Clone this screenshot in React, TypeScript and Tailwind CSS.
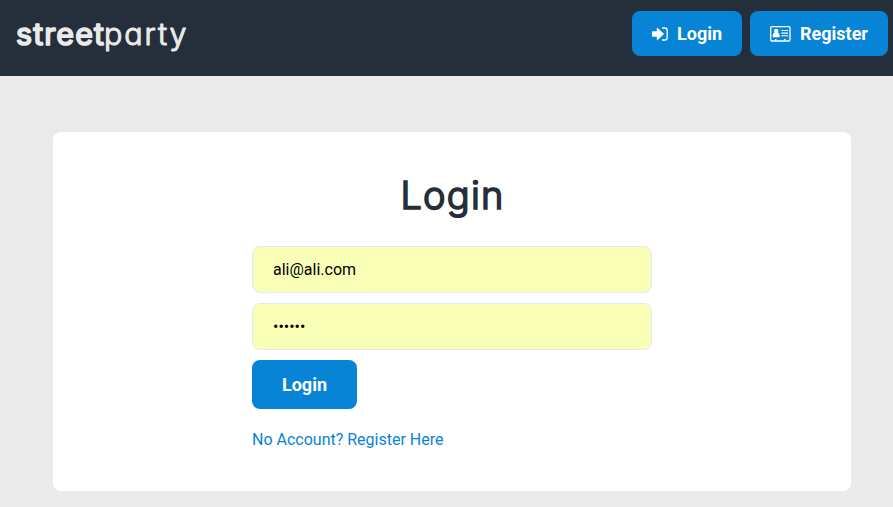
import type { InputHTMLAttributes, ReactNode } from "react";

function LoginIcon() {
  return (
    <svg width="17" height="16" viewBox="0 0 17 16" fill="none" className="shrink-0">
      <path d="M.8 5.3H4.8V2.3Q4.8 1.3 5.6 2L11.6 7.5Q12 8 11.6 8.5L5.6 14Q4.8 14.7 4.8 13.7V10.7H.8Q0 10.7 0 9.9V6.1Q0 5.3 .8 5.3Z" fill="#fff" />
      <path d="M10 2H12.6Q15.2 2 15.2 4.6V11.4Q15.2 14 12.6 14H10" stroke="#fff" strokeWidth="1.3" />
    </svg>
  );
}

function CardIcon() {
  return (
    <svg width="21" height="16" viewBox="0 0 21 16" fill="#fff" className="shrink-0">
      <rect x=".7" y=".7" width="19.3" height="14.3" rx="1.2" fill="none" stroke="#fff" strokeWidth="1.3" />
      <circle cx="6.2" cy="5" r="2.2" />
      <path d="M2.6 10.2Q2.6 7.2 4.5 6.6Q6.2 8.1 7.9 6.6Q9.8 7.2 9.8 10.2Q9.8 11.2 9 11.2H3.4Q2.6 11.2 2.6 10.2Z" />
      <path d="M11.3 4H18V5.1H11.3ZM11.3 6.6H18V7.7H11.3ZM11.3 9.2H18V10.3H11.3ZM5 13H6.5V14.5H5ZM14 13H15.5V14.5H14Z" />
    </svg>
  );
}

function NavButton({ icon, className, children }: { icon: ReactNode; className: string; children: ReactNode }) {
  return (
    <a href="#" className={`flex h-[45px] items-center rounded-lg bg-[#0884d6] pl-5 text-lg font-bold text-white ${className}`}>
      {icon}
      {children}
    </a>
  );
}

function Field(props: InputHTMLAttributes<HTMLInputElement>) {
  return (
    <input
      {...props}
      className="block h-[47px] w-full rounded-lg border border-[#e6e8ee] bg-[#faffb8] px-5 text-base text-black outline-none"
    />
  );
}

export default function App() {
  return (
    <div className="flex h-[507px] flex-col overflow-hidden bg-[#eaeaea] font-[Roboto,sans-serif]">
      <header className="flex h-[76px] shrink-0 items-start justify-between bg-[#252e3b] pt-[11px] pr-[5px] pl-4">
        <a href="#" aria-label="streetparty">
          <svg width="180" height="54" viewBox="0 0 180 54" fill="#eaeaea" stroke="#eaeaea" strokeLinejoin="round" className="font-[Inter,sans-serif] text-[30.5px] [font-feature-settings:'cv11']">
            <text x="0" y="34" textLength="88" className="font-normal" strokeWidth="1.7">street</text>
            <text x="88" y="34" textLength="82.5" className="font-light" strokeWidth="1.1">party</text>
          </svg>
        </a>
        <nav className="flex gap-2">
          <NavButton className="w-[110px] gap-2" icon={<LoginIcon />}>Login</NavButton>
          <NavButton className="w-[138px] gap-[9px]" icon={<CardIcon />}>Register</NavButton>
        </nav>
      </header>
      <main className="mt-14 ml-[53px] flex h-[359px] w-[798px] shrink-0 flex-col items-center rounded-lg bg-white pt-[38px]">
        <h1 className="h-[50px] pl-px font-[Inter,sans-serif] text-[38px] leading-[50px] font-light tracking-[1.2px] text-[#252e3b] [-webkit-text-stroke:1.7px_#252e3b] [stroke-linejoin:round]">
          Login
        </h1>
        <form className="mt-[26px] flex w-[400px] flex-col items-start gap-2.5" onSubmit={(e) => e.preventDefault()}>
          <Field type="email" defaultValue="ali@ali.com" />
          <Field type="password" defaultValue="secret" />
          <button className="h-[49px] w-[105px] rounded-lg bg-[#0884d6] text-lg font-bold text-white">Login</button>
          <a href="#" className="mt-[9px] text-base text-[#0884d6]">No Account? Register Here</a>
        </form>
      </main>
    </div>
  );
}
